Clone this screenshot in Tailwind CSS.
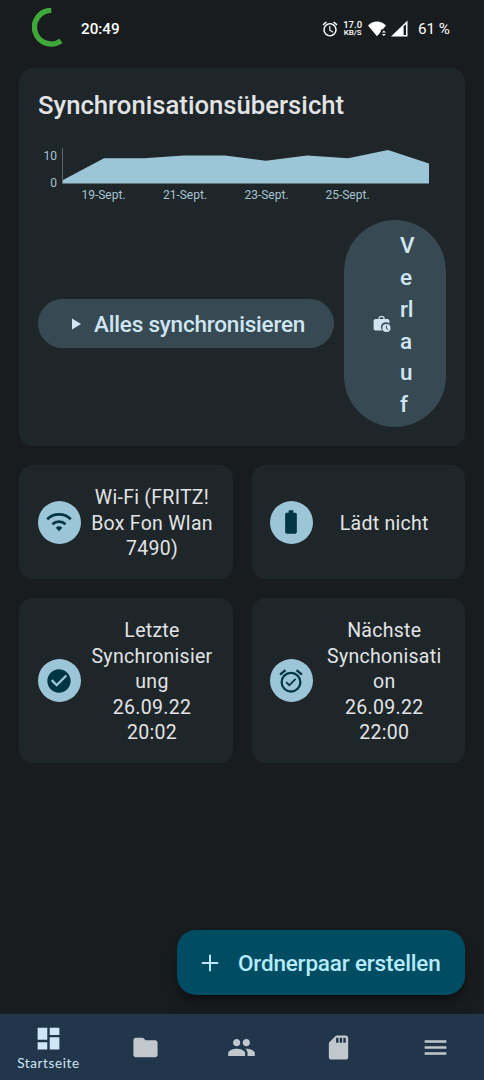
<!DOCTYPE html>
<html lang="de">
<head>
    <meta charset="UTF-8">
    <meta name="viewport" content="width=device-width, initial-scale=1.0">
    <title>Startseite</title>
    <script src="https://cdn.jsdelivr.net/npm/@tailwindcss/browser@4"></script>
</head>
<body class="bg-[#191c1e] text-[#e1e3e5] font-['Roboto',sans-serif]">
<div class="flex flex-col w-[484px] h-[1080px] overflow-hidden">

    <!-- Status bar -->
    <header class="flex items-center h-[68px] pb-[10px] pl-8 pr-[34px] text-white shrink-0">
        <svg class="w-10 h-10 -mt-0.5" viewBox="0 0 40 40" fill="none">
            <path d="M19.300 3A16.800 16.800 0 1 0 29 33.500" transform="translate(0 -.6)" stroke="#3ea83a" stroke-width="5.400"/>
        </svg>
        <span class="ml-[9px] text-[15.2px] font-medium">20:49</span>
        <div class="flex items-center ml-auto">
            <svg class="w-[18px] h-[18px]" viewBox="0 0 24 24" fill="currentColor">
                <path d="M22 5.720l-4.600-3.860-1.290 1.530 4.600 3.860L22 5.720zM7.880 3.390L6.600 1.860 2 5.710l1.290 1.530 4.590-3.850zM12.500 8H11v6l4.750 2.850.750-1.230-4-2.370V8zM12 4a9 9 0 1 0 0 18 9 9 0 0 0 0-18zm0 16c-3.870 0-7-3.130-7-7s3.130-7 7-7 7 3.130 7 7-3.130 7-7 7z"/>
            </svg>
            <span class="ml-[4px] flex flex-col items-center leading-[8px] font-medium">
                <span class="text-[9.5px]">17.0</span>
                <span class="text-[8px] tracking-[-0.1px]">KB/S</span>
            </span>
            <svg class="ml-[6px] w-[19px] h-4" viewBox="0 0 19 16" fill="currentColor">
                <path d="M0 4.400C5-.7 13-.7 18 4.400L9 15.200z"/>
                <path d="M12.800 8.500h6v7h-6z" fill="#191c1e"/>
                <path d="M14 11.400l1.900-2 1.900 2zM14 13l1.900 2 1.900-2z"/>
            </svg>
            <svg class="ml-1 w-[17px] h-[17px]" viewBox="0 0 17 17">
                <path d="M0 16.500L16.500.5v16z" fill="currentColor"/>
                <path d="M12.600 6.200l2.400-2v10.900h-2.400z" fill="#191c1e"/>
            </svg>
            <span class="ml-[10px] text-[15.2px]">61 %</span>
        </div>
    </header>

    <main class="flex flex-col grow px-[19px] pb-[19px]">
        <!-- Sync overview -->
        <section class="h-[378px] rounded-[14px] bg-[#1f2629] px-[19px] pt-[22px]">
            <h1 class="text-[25.7px] leading-[30px] font-medium">Synchronisationsübersicht</h1>
            <svg class="mt-[20px] w-[408px] h-[70px] text-[12px]" viewBox="38 140 408 70" fill="#9cc5d8">
                <path d="M62.500 148v36" stroke="#59666d" stroke-width="1"/>
                <path d="M63 180L104 158.300H144L184 155.500H225L266 160.700L307 155.500L348 158.200L388 150L429 163.500V183.500H63z"/>
                <g fill="#a5c3d0">
                    <text x="57" y="160" text-anchor="end">10</text>
                    <text x="57" y="187" text-anchor="end">0</text>
                    <text x="103.500" y="199" text-anchor="middle">19-Sept.</text>
                    <text x="185" y="199" text-anchor="middle">21-Sept.</text>
                    <text x="266.500" y="199" text-anchor="middle">23-Sept.</text>
                    <text x="347.500" y="199" text-anchor="middle">25-Sept.</text>
                </g>
            </svg>
            <div class="flex items-center justify-between mt-[10px] text-[#cfe6f2] text-[22.5px] font-medium">
                <button class="flex items-center w-[296px] h-[49px] rounded-full bg-[#374a53] pl-[33px]">
                    <svg class="w-3 h-3" viewBox="0 0 12 12" fill="currentColor"><path d="M1 .5v11L10 6z"/></svg>
                    <span class="ml-[11px] pt-[3px] tracking-[-0.2px]">Alles synchronisieren</span>
                </button>
                <button class="flex items-center w-[102px] h-[207px] rounded-[51px] bg-[#374a53] pl-[29px]">
                    <svg class="w-[18px] h-[18px]" viewBox="0 0 18 18" fill="currentColor">
                        <path d="M2 4h3.500V2.300L6.800 1h3.500l1.300 1.300V4H15l1.400 1.300v3.300a4.900 4.900 0 0 0-7 7H2L.6 14.300V5.300zM6.700 4h3.600V2.300H6.700z" fill-rule="evenodd"/>
                        <path d="M13.400 8.900a4.100 4.100 0 1 0 0 8.200 4.100 4.100 0 0 0 0-8.200zm-.5 1.500h1v2.500l1.500 1.500-.7.700-1.800-1.800z" fill-rule="evenodd"/>
                    </svg>
                    <span class="ml-[9px] pt-[4px] w-[17px] text-left leading-[31.7px] tracking-[-0.22px] break-all">Verlauf</span>
                </button>
            </div>
        </section>

        <!-- Status cards -->
        <section class="grid grid-cols-2 gap-[19px] mt-[19px] text-[19.5px] leading-[25.5px] tracking-[0.28px] text-center">
            <div class="flex items-center gap-[10px] h-[114px] rounded-[14px] bg-[#1f2629] pl-[18.5px] pr-[19px]">
                <div class="flex items-center justify-center shrink-0 w-[43px] h-[43px] rounded-full bg-[#9cc5d8] text-[#003544]">
                    <svg class="w-[28px] h-[28px]" viewBox="0 0 24 24" fill="none" stroke="currentColor" stroke-width="2.300">
                        <path d="M1.900 9.700a14.300 14.300 0 0 1 20.200 0M6.400 13.900a8 8 0 0 1 11.200 0"/>
                        <path d="M9.200 17a4.200 4.200 0 0 1 5.600 0L12 20z" fill="currentColor" stroke="none"/>
                    </svg>
                </div>
                <p class="grow pt-[3px]">Wi-Fi (FRITZ!<br>Box Fon Wlan<br>7490)</p>
            </div>
            <div class="flex items-center gap-[10px] h-[114px] rounded-[14px] bg-[#1f2629] pl-[18px] pr-[19px]">
                <div class="flex items-center justify-center shrink-0 w-[43px] h-[43px] rounded-full bg-[#9cc5d8] text-[#003544]">
                    <svg class="w-[28px] h-[28px]" viewBox="0 0 24 24" fill="currentColor"><path d="M15.670 4H14V2h-4v2H8.330C7.600 4 7 4.600 7 5.330v15.330C7 21.400 7.600 22 8.330 22h7.330c.74 0 1.340-.6 1.340-1.330V5.330C17 4.600 16.400 4 15.670 4z"/></svg>
                </div>
                <p class="grow pt-[3px]">Lädt nicht</p>
            </div>
            <div class="flex items-center gap-[10px] h-[165px] rounded-[14px] bg-[#1f2629] pl-[18.5px] pr-[19px]">
                <div class="flex items-center justify-center shrink-0 w-[43px] h-[43px] rounded-full bg-[#9cc5d8] text-[#003544]">
                    <svg class="w-[28px] h-[28px]" viewBox="0 0 24 24" fill="currentColor"><path d="M12 2C6.480 2 2 6.480 2 12s4.480 10 10 10 10-4.480 10-10S17.520 2 12 2zm-2 15l-5-5 1.410-1.410L10 14.170l7.590-7.590L19 8l-9 9z"/></svg>
                </div>
                <p class="grow pt-[3px]">Letzte<br>Synchronisier<br>ung<br>26.09.22<br>20:02</p>
            </div>
            <div class="flex items-center gap-[10px] h-[165px] rounded-[14px] bg-[#1f2629] pl-[18px] pr-[19px]">
                <div class="flex items-center justify-center shrink-0 w-[43px] h-[43px] rounded-full bg-[#9cc5d8] text-[#003544]">
                    <svg class="w-[28px] h-[28px]" viewBox="0 0 24 24" fill="currentColor"><path d="M22 5.720l-4.600-3.860-1.290 1.530 4.600 3.860L22 5.720zM7.880 3.390L6.600 1.860 2 5.710l1.290 1.530 4.590-3.850zM12 4a9 9 0 1 0 0 18 9 9 0 0 0 0-18zm0 16c-3.870 0-7-3.130-7-7s3.130-7 7-7 7 3.130 7 7-3.130 7-7 7zm-1.460-5.470L8.410 12.400l-1.060 1.060 3.180 3.180 6-6-1.060-1.060-4.930 4.950z"/></svg>
                </div>
                <p class="grow pt-[3px]">Nächste<br>Synchonisati<br>on<br>26.09.22<br>22:00</p>
            </div>
        </section>

        <button class="flex items-center self-end mt-auto w-[288px] h-[65px] rounded-[19px] bg-[#004d63] pl-[19px] text-[#b8eaff] text-[22.5px] font-medium shadow-lg shadow-black/40">
            <svg class="w-[28px] h-[28px]" viewBox="0 0 24 24" fill="currentColor"><path d="M19 12.850h-6.150V19h-1.700v-6.150H5v-1.700h6.150V5h1.700v6.150H19z"/></svg>
            <span class="ml-[14px] pt-0.5 tracking-[-0.18px]">Ordnerpaar erstellen</span>
        </button>
    </main>

    <!-- Bottom navigation -->
    <nav class="grid grid-cols-5 items-center justify-items-center h-[66px] shrink-0 bg-[#22364b] text-[#c0c7cd]">
        <a href="#" class="flex flex-col items-center pt-[3px] text-[#cfe6f7]">
            <svg class="w-[29px] h-[29px]" viewBox="0 0 24 24" fill="currentColor"><path d="M3 13h8V3H3v10zm0 8h8v-6H3v6zm10 0h8V11h-8v10zm0-18v6h8V3h-8z"/></svg>
            <span class="text-[13.5px] leading-[20px] tracking-[0.6px] font-['Lato',sans-serif]">Startseite</span>
        </a>
        <a href="#"><svg class="w-[29px] h-[29px]" viewBox="0 0 24 24" fill="currentColor"><path d="M10 4H4c-1.100 0-1.990.9-1.990 2L2 18c0 1.100.9 2 2 2h16c1.100 0 2-.9 2-2V8c0-1.100-.9-2-2-2h-8l-2-2z"/></svg></a>
        <a href="#"><svg class="w-[29px] h-[29px]" viewBox="0 0 24 24" fill="currentColor"><path d="M16 11c1.660 0 2.990-1.340 2.990-3S17.660 5 16 5s-3 1.340-3 3 1.340 3 3 3zm-8 0c1.660 0 2.990-1.340 2.990-3S9.660 5 8 5 5 6.340 5 8s1.340 3 3 3zm0 2c-2.330 0-7 1.170-7 3.500V19h14v-2.500c0-2.330-4.670-3.500-7-3.500zm8 0c-.29 0-.62.020-.97.050 1.160.84 1.970 1.970 1.970 3.450V19h6v-2.500c0-2.330-4.670-3.500-7-3.500z"/></svg></a>
        <a href="#"><svg class="w-[29px] h-[29px]" viewBox="0 0 24 24" fill="currentColor"><path d="M18 2h-8L4.020 8 4 20c0 1.100.9 2 2 2h12c1.100 0 2-.9 2-2V4c0-1.100-.9-2-2-2zm-6 6h-2V4h2v4zm3 0h-2V4h2v4zm3 0h-2V4h2v4z"/></svg></a>
        <a href="#"><svg class="w-[29px] h-[29px]" viewBox="0 0 24 24" fill="currentColor"><path d="M3 18h18v-2H3v2zm0-5h18v-2H3v2zm0-7v2h18V6H3z"/></svg></a>
    </nav>
</div>
</body>
</html>
